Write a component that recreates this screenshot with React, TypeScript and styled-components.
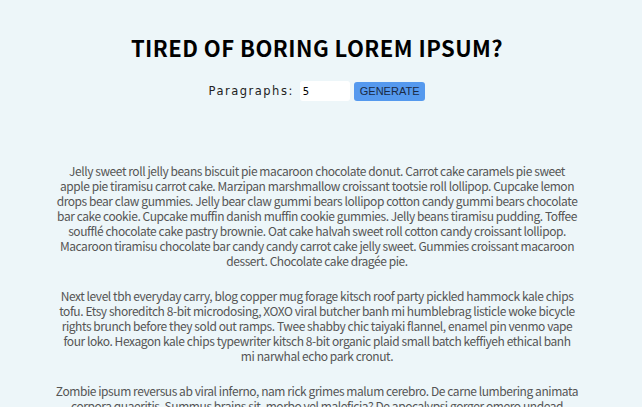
import React from "react";
import styled, { createGlobalStyle } from "styled-components";

const Global = createGlobalStyle`
  html, body { margin: 0; padding: 0; background: #edf6f9; }
  body { font-family: "Noto Sans CJK KR", "Noto Sans", sans-serif; }
`;

const Page = styled.div`
  display: flex;
  flex-direction: column;
  align-items: center;
  padding: 34px 8px 0 0;
`;

const Title = styled.h1`
  margin: 0;
  font-family: "Noto Sans CJK KR", "Noto Sans", sans-serif;
  font-weight: 700;
  font-size: 22px;
  line-height: 26px;
  color: #000;
  letter-spacing: 0.45px;
`;

const Controls = styled.form`
  display: flex;
  align-items: center;
  gap: 4px;
  margin-top: 21px;
`;

const Label = styled.label`
  font-family: "DejaVu Sans", sans-serif;
  font-size: 11.5px;
  letter-spacing: 1.5px;
  color: #222;
  margin-right: 2px;
`;

const Input = styled.input`
  width: 50px;
  height: 20px;
  box-sizing: border-box;
  border: none;
  border-radius: 3px;
  background: #fff;
  padding: 0 3px;
  font-family: "DejaVu Sans", sans-serif;
  font-size: 10px;
  color: #000;
  outline: none;
`;

const Button = styled.button`
  height: 19px;
  padding: 0 6px;
  border: none;
  border-radius: 3px;
  background: #5599ee;
  color: #1a2a44;
  font-family: "Liberation Sans", Arial, sans-serif;
  font-size: 11px;
  line-height: 19px;
  cursor: pointer;
`;

const Text = styled.div`
  margin-top: 62px;
  width: 524px;
  display: flex;
  flex-direction: column;
  gap: 20px;
`;

const Para = styled.p<{ $inset?: number }>`
  margin: 0;
  padding: 0 ${(p) => p.$inset ?? 0}px;
  text-align: center;
  font-size: 12px;
  letter-spacing: -0.43px;
  line-height: 15px;
  color: #555;
`;

const paras: { text: string; inset?: number }[] = [
  {
    text: "Jelly sweet roll jelly beans biscuit pie macaroon chocolate donut. Carrot cake caramels pie sweet apple pie tiramisu carrot cake. Marzipan marshmallow croissant tootsie roll lollipop. Cupcake lemon drops bear claw gummies. Jelly bear claw gummi bears lollipop cotton candy gummi bears chocolate bar cake cookie. Cupcake muffin danish muffin cookie gummies. Jelly beans tiramisu pudding. Toffee soufflé chocolate cake pastry brownie. Oat cake halvah sweet roll cotton candy croissant lollipop. Macaroon tiramisu chocolate bar candy candy carrot cake jelly sweet. Gummies croissant macaroon dessert. Chocolate cake dragée pie.",
  },
  {
    text: "Next level tbh everyday carry, blog copper mug forage kitsch roof party pickled hammock kale chips tofu. Etsy shoreditch 8-bit microdosing, XOXO viral butcher banh mi humblebrag listicle woke bicycle rights brunch before they sold out ramps. Twee shabby chic taiyaki flannel, enamel pin venmo vape four loko. Hexagon kale chips typewriter kitsch 8-bit organic plaid small batch keffiyeh ethical banh mi narwhal echo park cronut.",
    inset: 2,
  },
  {
    text: "Zombie ipsum reversus ab viral inferno, nam rick grimes malum cerebro. De carne lumbering animata corpora quaeritis. Summus brains sit, morbo vel maleficia? De apocalypsi gorger omero undead survivor dictum mauris.",
  },
];

export default function App() {
  return (
    <>
      <Global />
      <Page>
        <Title>TIRED OF BORING LOREM IPSUM?</Title>
        <Controls onSubmit={(e) => e.preventDefault()}>
          <Label htmlFor="count">Paragraphs:</Label>
          <Input id="count" type="text" defaultValue="5" />
          <Button type="submit">GENERATE</Button>
        </Controls>
        <Text>
          {paras.map((p, i) => (
            <Para key={i} $inset={p.inset}>
              {p.text}
            </Para>
          ))}
        </Text>
      </Page>
    </>
  );
}
